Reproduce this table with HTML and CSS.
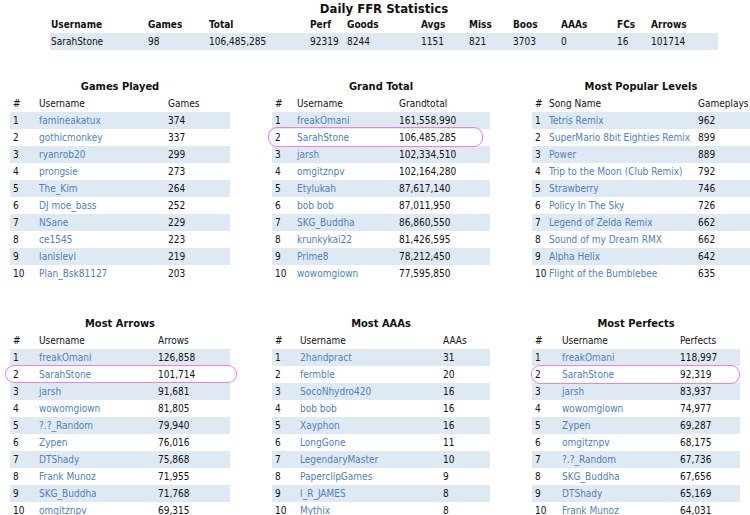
FILE: index.html
```html
<!DOCTYPE html>
<html>
<head>
<meta charset="utf-8">
<title>Daily FFR Statistics</title>
<link rel="stylesheet" href="styles.css">
</head>
<body>
<div class="page">
  <table class="summary">
    <caption>Daily FFR Statistics</caption>
    <colgroup>
      <col class="s1"><col class="s2"><col class="s3"><col class="s4"><col class="s5"><col class="s6"><col class="s7"><col class="s8"><col class="s9"><col class="s10"><col class="s11">
    </colgroup>
    <thead>
      <tr><th>Username</th><th>Games</th><th>Total</th><th>Perf</th><th>Goods</th><th>Avgs</th><th>Miss</th><th>Boos</th><th>AAAs</th><th>FCs</th><th>Arrows</th></tr>
    </thead>
    <tbody>
      <tr><td>SarahStone</td><td>98</td><td>106,485,285</td><td>92319</td><td>8244</td><td>1151</td><td>821</td><td>3703</td><td>0</td><td>16</td><td>101714</td></tr>
    </tbody>
  </table>

  <div class="boards">
    <table class="board games">
      <caption>Games Played</caption>
      <colgroup><col class="c1"><col class="c2"><col class="c3"></colgroup>
      <thead><tr><th>#</th><th>Username</th><th>Games</th></tr></thead>
      <tbody>
        <tr><td>1</td><td><a>famineakatux</a></td><td>374</td></tr>
        <tr><td>2</td><td><a>gothicmonkey</a></td><td>337</td></tr>
        <tr><td>3</td><td><a>ryanrob20</a></td><td>299</td></tr>
        <tr><td>4</td><td><a>prongsie</a></td><td>273</td></tr>
        <tr><td>5</td><td><a>The_Kim</a></td><td>264</td></tr>
        <tr><td>6</td><td><a>DJ moe_bass</a></td><td>252</td></tr>
        <tr><td>7</td><td><a>NSane</a></td><td>229</td></tr>
        <tr><td>8</td><td><a>ce1545</a></td><td>223</td></tr>
        <tr><td>9</td><td><a>Ianislevi</a></td><td>219</td></tr>
        <tr><td>10</td><td><a>Plan_Bsk81127</a></td><td>203</td></tr>
      </tbody>
    </table>

    <table class="board grand">
      <caption>Grand Total</caption>
      <colgroup><col class="c1"><col class="c2"><col class="c3"></colgroup>
      <thead><tr><th>#</th><th>Username</th><th>Grandtotal</th></tr></thead>
      <tbody>
        <tr><td>1</td><td><a>freakOmani</a></td><td>161,558,990</td></tr>
        <tr class="hl"><td>2</td><td><a>SarahStone</a></td><td>106,485,285</td></tr>
        <tr><td>3</td><td><a>jarsh</a></td><td>102,334,510</td></tr>
        <tr><td>4</td><td><a>omgitznpv</a></td><td>102,164,280</td></tr>
        <tr><td>5</td><td><a>Etylukah</a></td><td>87,617,140</td></tr>
        <tr><td>6</td><td><a>bob bob</a></td><td>87,011,950</td></tr>
        <tr><td>7</td><td><a>SKG_Buddha</a></td><td>86,860,550</td></tr>
        <tr><td>8</td><td><a>krunkykai22</a></td><td>81,426,595</td></tr>
        <tr><td>9</td><td><a>Prime8</a></td><td>78,212,450</td></tr>
        <tr><td>10</td><td><a>wowomgiown</a></td><td>77,595,850</td></tr>
      </tbody>
    </table>

    <table class="board popular">
      <caption>Most Popular Levels</caption>
      <colgroup><col class="c1"><col class="c2"><col class="c3"></colgroup>
      <thead><tr><th>#</th><th>Song Name</th><th>Gameplays</th></tr></thead>
      <tbody>
        <tr><td>1</td><td><a>Tetris Remix</a></td><td>962</td></tr>
        <tr><td>2</td><td><a>SuperMario 8bit Eighties Remix</a></td><td>899</td></tr>
        <tr><td>3</td><td><a>Power</a></td><td>889</td></tr>
        <tr><td>4</td><td><a>Trip to the Moon (Club Remix)</a></td><td>792</td></tr>
        <tr><td>5</td><td><a>Strawberry</a></td><td>746</td></tr>
        <tr><td>6</td><td><a>Policy In The Sky</a></td><td>726</td></tr>
        <tr><td>7</td><td><a>Legend of Zelda Remix</a></td><td>662</td></tr>
        <tr><td>8</td><td><a>Sound of my Dream RMX</a></td><td>662</td></tr>
        <tr><td>9</td><td><a>Alpha Helix</a></td><td>642</td></tr>
        <tr><td>10</td><td><a>Flight of the Bumblebee</a></td><td>635</td></tr>
      </tbody>
    </table>

    <table class="board arrows">
      <caption>Most Arrows</caption>
      <colgroup><col class="c1"><col class="c2"><col class="c3"></colgroup>
      <thead><tr><th>#</th><th>Username</th><th>Arrows</th></tr></thead>
      <tbody>
        <tr><td>1</td><td><a>freakOmani</a></td><td>126,858</td></tr>
        <tr class="hl"><td>2</td><td><a>SarahStone</a></td><td>101,714</td></tr>
        <tr><td>3</td><td><a>jarsh</a></td><td>91,681</td></tr>
        <tr><td>4</td><td><a>wowomgiown</a></td><td>81,805</td></tr>
        <tr><td>5</td><td><a>?.?_Random</a></td><td>79,940</td></tr>
        <tr><td>6</td><td><a>Zypen</a></td><td>76,016</td></tr>
        <tr><td>7</td><td><a>DTShady</a></td><td>75,868</td></tr>
        <tr><td>8</td><td><a>Frank Munoz</a></td><td>71,955</td></tr>
        <tr><td>9</td><td><a>SKG_Buddha</a></td><td>71,768</td></tr>
        <tr><td>10</td><td><a>omgitznpv</a></td><td>69,315</td></tr>
      </tbody>
    </table>

    <table class="board aaas">
      <caption>Most AAAs</caption>
      <colgroup><col class="c1"><col class="c2"><col class="c3"></colgroup>
      <thead><tr><th>#</th><th>Username</th><th>AAAs</th></tr></thead>
      <tbody>
        <tr><td>1</td><td><a>2handpract</a></td><td>31</td></tr>
        <tr><td>2</td><td><a>fermble</a></td><td>20</td></tr>
        <tr><td>3</td><td><a>SocoNhydro420</a></td><td>16</td></tr>
        <tr><td>4</td><td><a>bob bob</a></td><td>16</td></tr>
        <tr><td>5</td><td><a>Xayphon</a></td><td>16</td></tr>
        <tr><td>6</td><td><a>LongGone</a></td><td>11</td></tr>
        <tr><td>7</td><td><a>LegendaryMaster</a></td><td>10</td></tr>
        <tr><td>8</td><td><a>PaperclipGames</a></td><td>9</td></tr>
        <tr><td>9</td><td><a>I_R_JAMES</a></td><td>8</td></tr>
        <tr><td>10</td><td><a>Mythix</a></td><td>8</td></tr>
      </tbody>
    </table>

    <table class="board perfects">
      <caption>Most Perfects</caption>
      <colgroup><col class="c1"><col class="c2"><col class="c3"></colgroup>
      <thead><tr><th>#</th><th>Username</th><th>Perfects</th></tr></thead>
      <tbody>
        <tr><td>1</td><td><a>freakOmani</a></td><td>118,997</td></tr>
        <tr class="hl"><td>2</td><td><a>SarahStone</a></td><td>92,319</td></tr>
        <tr><td>3</td><td><a>jarsh</a></td><td>83,937</td></tr>
        <tr><td>4</td><td><a>wowomgiown</a></td><td>74,977</td></tr>
        <tr><td>5</td><td><a>Zypen</a></td><td>69,287</td></tr>
        <tr><td>6</td><td><a>omgitznpv</a></td><td>68,175</td></tr>
        <tr><td>7</td><td><a>?.?_Random</a></td><td>67,736</td></tr>
        <tr><td>8</td><td><a>SKG_Buddha</a></td><td>67,656</td></tr>
        <tr><td>9</td><td><a>DTShady</a></td><td>65,169</td></tr>
        <tr><td>10</td><td><a>Frank Munoz</a></td><td>64,031</td></tr>
      </tbody>
    </table>
  </div>
</div>
</body>
</html>
```

FILE: styles.css
```css
html, body {
  margin: 0;
  padding: 0;
  background: #ffffff;
}

body {
  font-family: "DejaVu Sans Condensed", "DejaVu Sans", sans-serif;
  font-size: 10px;
  color: #111111;
}

.page {
  width: 750px;
}

table {
  border-collapse: collapse;
  border-spacing: 0;
  table-layout: fixed;
}

th, td {
  padding: 0;
  text-align: left;
  white-space: nowrap;
  overflow: visible;
}

caption {
  font-weight: bold;
  text-align: center;
}

/* ---- summary ---- */
.summary {
  margin-left: 50px;
  width: 668px;
}

.summary caption {
  font-size: 13px;
  line-height: 17px;
  height: 17px;
}

.summary th {
  font-weight: bold;
  height: 16px;
  line-height: 16px;
  padding-left: 1px;
}

.summary td {
  height: 17px;
  line-height: 17px;
  padding-left: 1px;
  background: #dfe9f4;
}

.s1 { width: 97px; }
.s2 { width: 61px; }
.s3 { width: 101px; }
.s4 { width: 37px; }
.s5 { width: 74px; }
.s6 { width: 48px; }
.s7 { width: 44px; }
.s8 { width: 48px; }
.s9 { width: 56px; }
.s10 { width: 34px; }
.s11 { width: 68px; }

/* ---- boards ---- */
.boards {
  display: grid;
  grid-template-columns: 220px 218px 218px;
  column-gap: 42px;
  row-gap: 34px;
  padding-left: 10px;
  margin-top: 29px;
  align-items: start;
}

.board caption {
  font-size: 11px;
  line-height: 16px;
  height: 16px;
}

.board th {
  font-weight: normal;
  height: 17px;
  line-height: 17px;
  padding-left: 3px;
}

.board td {
  height: 17px;
  line-height: 17px;
  padding-left: 3px;
}

.board tbody tr:nth-child(odd) td {
  background: #dfe9f4;
}

.board a {
  color: #4f80bd;
  text-decoration: none;
}

.games { width: 220px; }
.games .c1 { width: 26px; }
.games .c2 { width: 129px; }
.games .c3 { width: 65px; }

.grand { width: 218px; }
.grand .c1 { width: 22px; }
.grand .c2 { width: 102px; }
.grand .c3 { width: 94px; }

.popular { width: 218px; }
.popular .c1 { width: 14px; }
.popular .c2 { width: 149px; }
.popular .c3 { width: 55px; }

.arrows { width: 220px; }
.arrows .c1 { width: 26px; }
.arrows .c2 { width: 119px; }
.arrows .c3 { width: 75px; }

.aaas { width: 218px; }
.aaas .c1 { width: 25px; }
.aaas .c2 { width: 143px; }
.aaas .c3 { width: 50px; }

.perfects { width: 208px; }
.perfects .c1 { width: 27px; }
.perfects .c2 { width: 118px; }
.perfects .c3 { width: 63px; }

/* ---- highlight ring ---- */
tr.hl {
  position: relative;
}

tr.hl::after {
  content: "";
  position: absolute;
  border: 1px solid #f07cf0;
  border-radius: 9px;
  box-sizing: border-box;
  pointer-events: none;
}

.grand tr.hl::after {
  left: -4px;
  top: -2px;
  width: 215px;
  height: 20px;
}

.arrows tr.hl::after {
  left: -5px;
  top: -1px;
  width: 232px;
  height: 18px;
}

.perfects tr.hl::after {
  left: -1px;
  top: -1px;
  width: 209px;
  height: 19px;
}
```
